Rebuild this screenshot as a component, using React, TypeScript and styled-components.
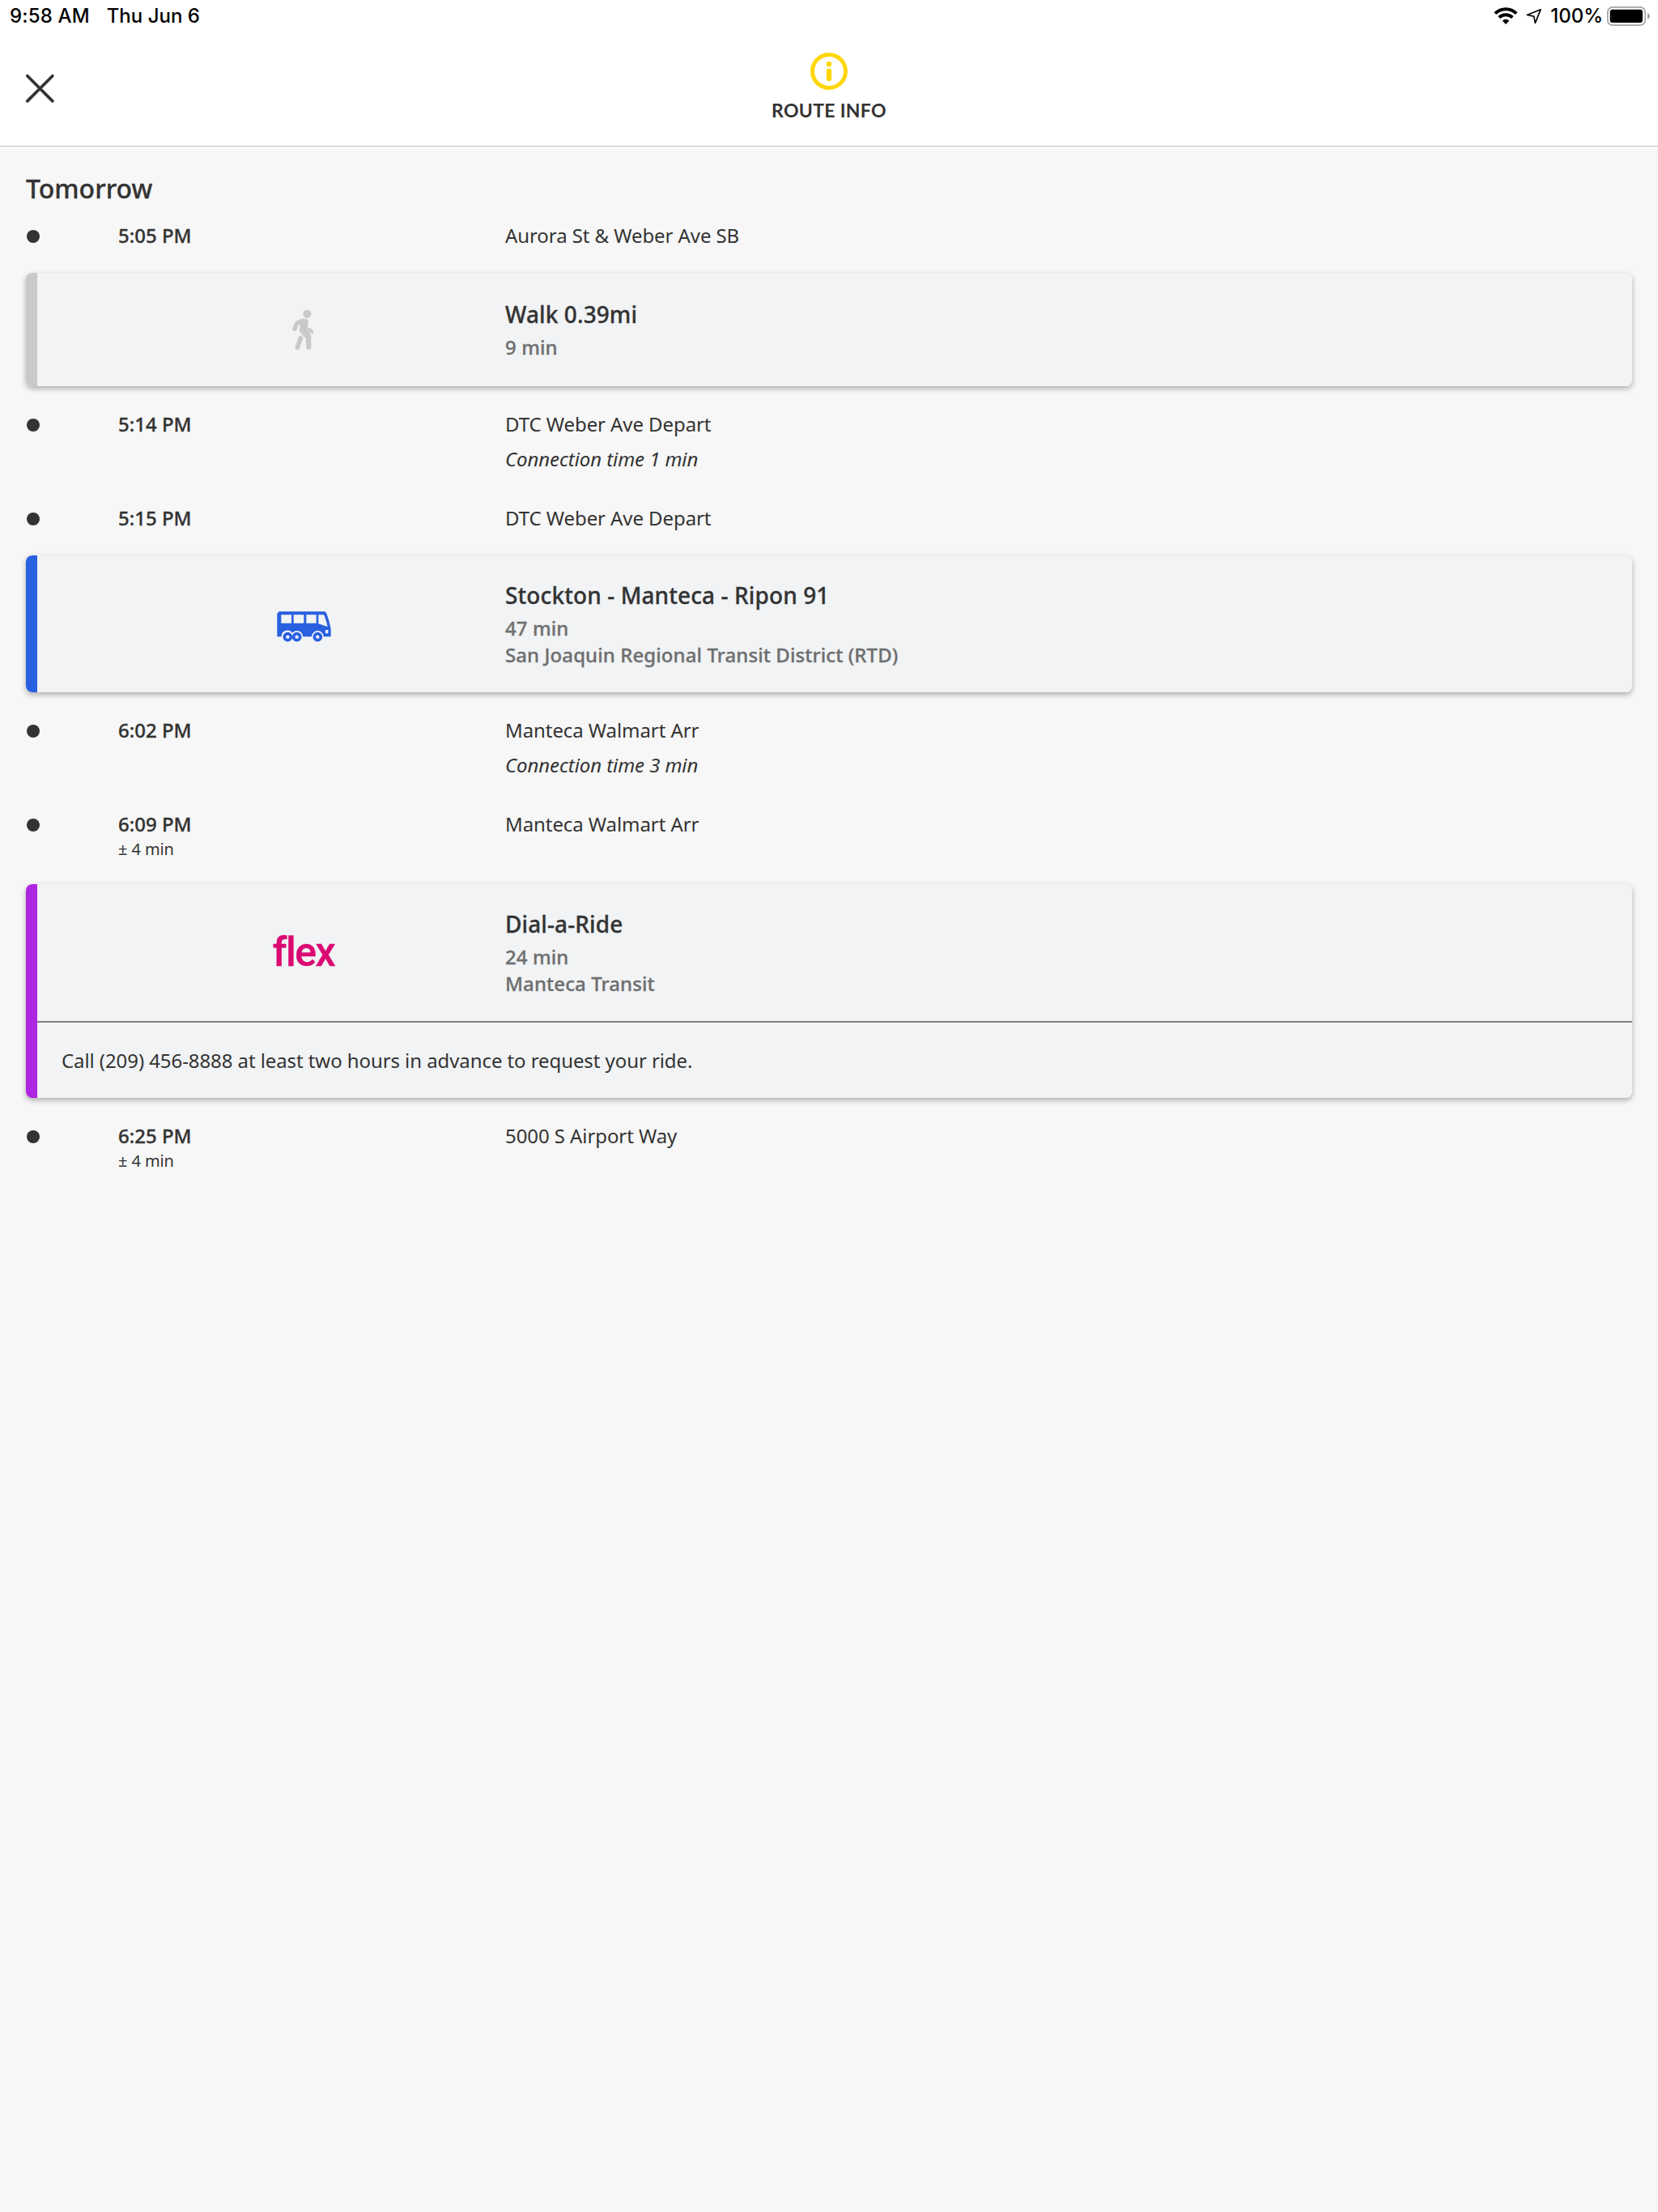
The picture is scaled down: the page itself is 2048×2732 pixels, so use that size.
import React from "react";
import styled, { createGlobalStyle, css } from "styled-components";

const GlobalStyle = createGlobalStyle`
  * { box-sizing: border-box; }
  html, body { margin: 0; background: #f7f7f7; }
  body { font-family: "Noto Sans", sans-serif; color: #333; }
  svg { display: block; flex: none; }
`;

const medium = css`
  font-weight: 500;
  -webkit-text-stroke: 0.3px currentColor;
`;

const Screen = styled.div`
  width: 2048px;
  min-height: 2732px;
  background: #f7f7f7;
`;

const StatusBar = styled.div`
  display: flex;
  align-items: center;
  justify-content: space-between;
  height: 40px;
  padding: 0 9px 0 12px;
  background: #fff;
  color: #000;
  font: 500 24px/40px Inter, sans-serif;
`;

const StatusText = styled.div<{ $spacing?: number }>`
  letter-spacing: ${(p) => p.$spacing ?? 0}px;
  white-space: nowrap;
`;

const StatusGroup = styled.div<{ $gap: number }>`
  display: flex;
  align-items: center;
  gap: ${(p) => p.$gap}px;
`;

const Header = styled.header`
  display: grid;
  grid-template-columns: 100px 1fr 100px;
  height: 141px;
  background: #fff;
  border-bottom: 1px solid #c4c4c4;
`;

const CloseButton = styled.button`
  display: flex;
  align-items: flex-start;
  width: 100px;
  height: 140px;
  padding: 51px 0 0 31px;
  border: 0;
  background: none;
`;

const HeaderTitle = styled.div`
  display: flex;
  flex-direction: column;
  align-items: center;
  padding-top: 24px;
`;

const TitleText = styled.h1`
  margin: 9px 0 0;
  font: 700 23px/30px Lato, sans-serif;
  letter-spacing: 0.3px;
  color: #333;
`;

const Itinerary = styled.main`
  display: flex;
  flex-direction: column;
  padding: 30px 32px 0;
`;

const DayHeading = styled.h2`
  ${medium}
  margin: 0 0 20px;
  font-size: 32px;
  line-height: 43px;
`;

const StopRow = styled.div<{ $after: number }>`
  display: grid;
  grid-template-columns: 114px 478px 1fr;
  margin-bottom: ${(p) => p.$after}px;
  font-size: 24px;
  line-height: 33px;
`;

const Dot = styled.span`
  width: 16px;
  height: 16px;
  margin: 10px 0 0 1px;
  border-radius: 50%;
  background: #333;
`;

const Time = styled.div`
  ${medium}
`;

const Place = styled.div`
  letter-spacing: -0.08px;
`;

const Variance = styled.div`
  margin-top: 1px;
  font-size: 20px;
  line-height: 27px;
  letter-spacing: -0.1px;
`;

const Connection = styled.div`
  margin-top: 10px;
  font-style: italic;
`;

const LegCard = styled.section<{ $color: string }>`
  display: flex;
  margin-bottom: 30px;
  border-radius: 8px;
  background: linear-gradient(to right, ${(p) => p.$color} 14px, #f1f3f5 14px);
  padding-left: 14px;
  box-shadow: 0 3px 7px rgba(0, 0, 0, 0.3);
`;

const LegBody = styled.div`
  flex: 1;
`;

const LegMain = styled.div<{ $height: number }>`
  display: grid;
  grid-template-columns: 578px 1fr;
  align-items: center;
  height: ${(p) => p.$height}px;
`;

const LegIcon = styled.div`
  display: flex;
  justify-content: center;
  padding-left: 80px;
`;

const FlexLogo = styled.span`
  padding-bottom: 2px;
  font: 500 50px/56px Roboto, sans-serif;
  letter-spacing: -1.5px;
  color: #db0a72;
  -webkit-text-stroke: 0.4px #db0a72;
`;

const LegTitle = styled.h3`
  ${medium}
  margin: 0 0 5px;
  font-size: 28px;
  line-height: 38px;
  letter-spacing: 0.1px;
`;

const LegDetail = styled.div`
  ${medium}
  font-size: 24px;
  line-height: 33px;
  letter-spacing: 0.08px;
  color: #6f6f6f;
`;

const LegNote = styled.p`
  margin: 0;
  padding: 30px;
  border-top: 2px solid #808080;
  font-size: 24px;
  line-height: 33px;
  letter-spacing: -0.08px;
`;

const WifiIcon = () => (
  <svg width="30" height="22" viewBox="78 27 90 66" fill="none" stroke="#000">
    <path d="M83.500 50 A56 56 0 0 1 162.500 50" strokeWidth="12" />
    <path d="M98 64.500 A36 36 0 0 1 148 64.500" strokeWidth="12" />
    <path d="M123 90 L110.500 77 Q123 66 135.500 77 Z" fill="#000" stroke="none" />
  </svg>
);

const LocationIcon = () => (
  <svg width="20" height="20" viewBox="196 33 60 60" fill="none" stroke="#000" strokeWidth="5" strokeLinejoin="round">
    <path d="M250 38.500 L200 58.500 L225 63.500 L230 88 Z" />
  </svg>
);

const BatteryIcon = () => (
  <svg width="55" height="26" viewBox="492 21 165 78">
    <rect x="497.500" y="26.500" width="139" height="67" rx="18" fill="none" stroke="#a3a3a3" strokeWidth="5" />
    <rect x="506" y="35" width="121" height="49" rx="9" fill="#000" />
    <path d="M645 49 Q654 52 654 60 Q654 68 645 71 Z" fill="#a3a3a3" />
  </svg>
);

const CloseIcon = () => (
  <svg width="37" height="37" viewBox="31 91 37 37" stroke="#333" strokeWidth="3.700" strokeLinecap="round">
    <path d="M33.800 93.800 L64.900 124.900 M64.900 93.800 L33.800 124.900" />
  </svg>
);

const InfoIcon = () => (
  <svg width="48" height="48" viewBox="0 0 48 48">
    <circle cx="24" cy="24" r="20.500" fill="none" stroke="#ffd60a" strokeWidth="5" />
    <circle cx="24" cy="15.100" r="3.300" fill="#ffd60a" />
    <rect x="20.900" y="20.500" width="6.200" height="15.800" rx="3.100" fill="#ffd60a" />
  </svg>
);

const WalkIcon = () => (
  <svg width="110" height="90" viewBox="0 6 330 270" fill="none" stroke="#c9c9c9" strokeLinecap="round" strokeLinejoin="round">
    <circle cx="178" cy="83.500" r="15" fill="#c9c9c9" stroke="none" />
    <path d="M154 103 Q180 99 181 107 L179 143 Q192 156 192 170 L192 208 Q190 216 183 215 Q176 215 176 208 L174 173 L153 151 Q149 146 151 140 L154 121 L145 124 L139 142 Q134 149 127 144 Q124 141 126 136 L133 116 Q135 112 139 110 Z" fill="#c9c9c9" strokeWidth="2" />
    <path d="M155 171 L142 207" strokeWidth="17" />
    <path d="M186 141 L196 149" strokeWidth="12" />
    <path d="M148 156 L168 177" stroke="#f1f3f5" strokeWidth="3" />
  </svg>
);

const BusIcon = () => (
  <svg width="110" height="80" viewBox="0 2 330 240">
    <path d="M74 75 H242 Q247 75 249 80 Q261 109 266 140 V168 H239 A22 22 0 0 0 195 168 H162 A22 22 0 0 0 123 154 A22 22 0 0 0 83 168 H67 V82 Z" fill="#2860e0" />
    <path d="M82 87 H120 V118 H82 Z M128 87 H166 V118 H128 Z M175 87 H212 V118 H175 Z M220 87 H240 Q249 107 254 131 L220 120 Z M246 143 H256 V156 H246 Z" fill="#f1f3f5" />
    <g fill="none" stroke="#2860e0" strokeWidth="11">
      <circle cx="106" cy="169" r="12" />
      <circle cx="140" cy="169" r="12" />
      <circle cx="217" cy="169" r="12" />
    </g>
  </svg>
);

type StopProps = { time: string; place: string; variance?: string; connection?: string };

const Stop = ({ time, place, variance, connection }: StopProps) => (
  <StopRow $after={connection ? 40 : 30}>
    <Dot />
    <div>
      <Time>{time}</Time>
      {variance && <Variance>{variance}</Variance>}
    </div>
    <Place>
      {place}
      {connection && <Connection>{connection}</Connection>}
    </Place>
  </StopRow>
);

type LegProps = { color: string; icon: React.ReactNode; title: string; details: string[]; height: number; note?: string };

const Leg = ({ color, icon, title, details, height, note }: LegProps) => (
  <LegCard $color={color}>
    <LegBody>
      <LegMain $height={height}>
        <LegIcon>{icon}</LegIcon>
        <div>
          <LegTitle>{title}</LegTitle>
          {details.map((d) => (
            <LegDetail key={d}>{d}</LegDetail>
          ))}
        </div>
      </LegMain>
      {note && <LegNote>{note}</LegNote>}
    </LegBody>
  </LegCard>
);

export default function App() {
  return (
    <Screen>
      <GlobalStyle />
      <StatusBar>
        <StatusGroup $gap={21}>
          <StatusText $spacing={0.15}>9:58 AM</StatusText>
          <StatusText>Thu Jun 6</StatusText>
        </StatusGroup>
        <StatusGroup $gap={4}>
          <StatusGroup $gap={10}>
            <WifiIcon />
            <LocationIcon />
            <StatusText>100%</StatusText>
          </StatusGroup>
          <BatteryIcon />
        </StatusGroup>
      </StatusBar>
      <Header>
        <CloseButton aria-label="Close">
          <CloseIcon />
        </CloseButton>
        <HeaderTitle>
          <InfoIcon />
          <TitleText>ROUTE INFO</TitleText>
        </HeaderTitle>
      </Header>
      <Itinerary>
        <DayHeading>Tomorrow</DayHeading>
        <Stop time="5:05 PM" place="Aurora St & Weber Ave SB" />
        <Leg color="#c9c9c9" icon={<WalkIcon />} title="Walk 0.39mi" details={["9 min"]} height={140} />
        <Stop time="5:14 PM" place="DTC Weber Ave Depart" connection="Connection time 1 min" />
        <Stop time="5:15 PM" place="DTC Weber Ave Depart" />
        <Leg
          color="#2860e0"
          icon={<BusIcon />}
          title="Stockton - Manteca - Ripon 91"
          details={["47 min", "San Joaquin Regional Transit District (RTD)"]}
          height={169}
        />
        <Stop time="6:02 PM" place="Manteca Walmart Arr" connection="Connection time 3 min" />
        <Stop time="6:09 PM" place="Manteca Walmart Arr" variance="± 4 min" />
        <Leg
          color="#ad26e0"
          icon={<FlexLogo>flex</FlexLogo>}
          title="Dial-a-Ride"
          details={["24 min", "Manteca Transit"]}
          height={169}
          note="Call (209) 456-8888 at least two hours in advance to request your ride."
        />
        <Stop time="6:25 PM" place="5000 S Airport Way" variance="± 4 min" />
      </Itinerary>
    </Screen>
  );
}
